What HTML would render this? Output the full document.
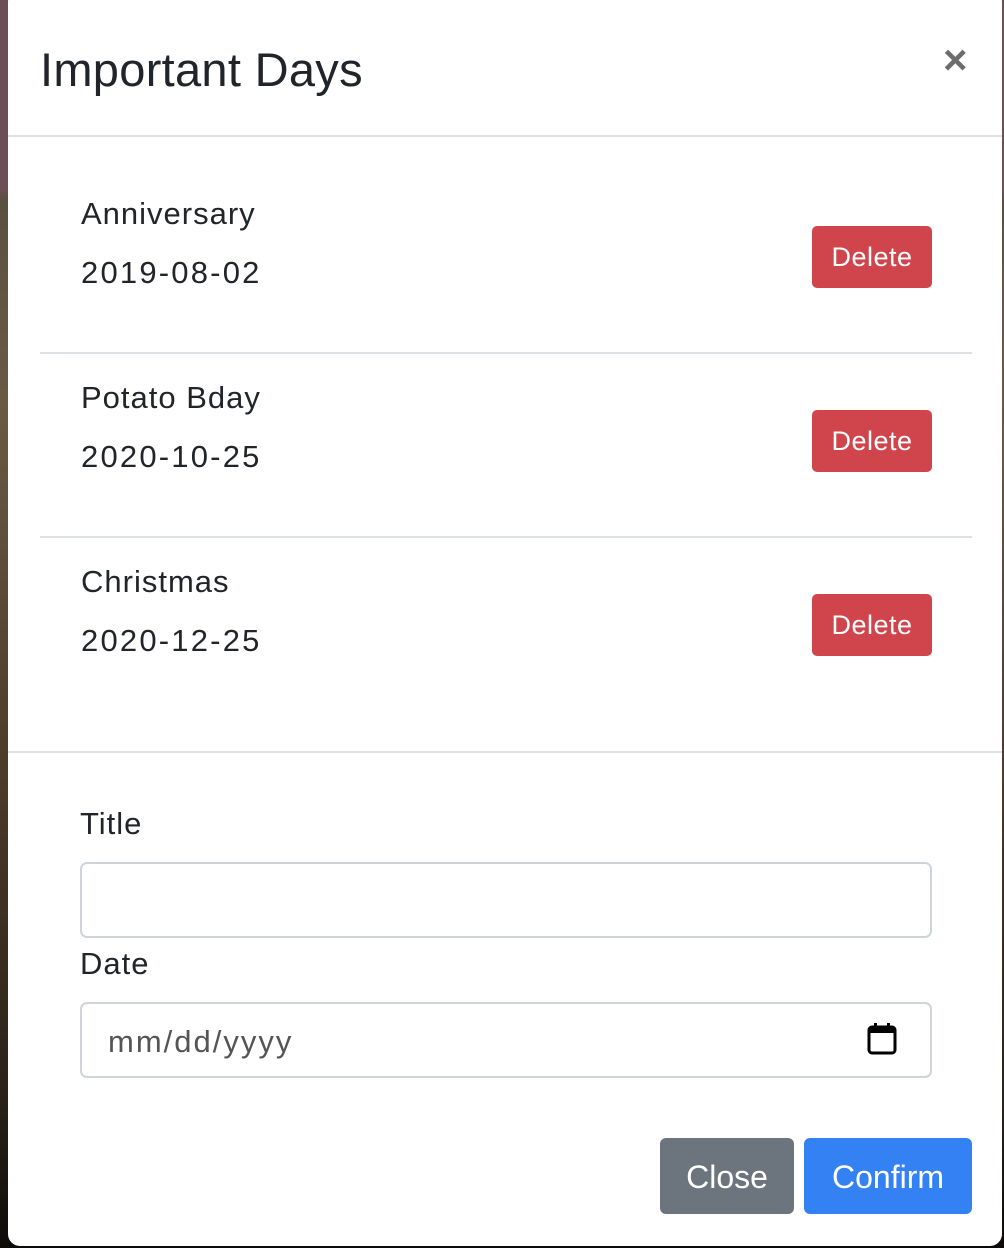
<!DOCTYPE html>
<html><head><style>
body{margin:0;width:1004px;height:1248px;overflow:hidden;font-family:"Liberation Sans",sans-serif;color:#212529;background:linear-gradient(#6b4f55 0,#6b4f55 190px,#5a5040 200px,#6a5a44 400px,#4a3828 800px,#2a2218 1100px,#0d0b08 1248px);position:relative}
.m{position:absolute;left:8px;top:-10px;width:994px;height:1256px;background:#fff;border-radius:12px}
.t{position:absolute;left:40px;top:43px;font-size:47px;line-height:54px;letter-spacing:0.3px}
.x{position:absolute;left:943px;top:40px;font-size:42px;font-weight:bold;color:#6c6c6c;line-height:40px}
.hr{position:absolute;height:2px;background:#dee2e6}
.n{position:absolute;left:81px;font-size:31px;line-height:36px;letter-spacing:1px}
.d{letter-spacing:2.2px}
.del{position:absolute;left:812px;width:120px;height:62px;background:#d0454c;color:#fff;border-radius:5px;font-size:27px;text-align:center;line-height:62px;letter-spacing:0.5px}
.lb{position:absolute;left:80px;font-size:31px;line-height:36px;letter-spacing:1px}
.in{position:absolute;left:80px;width:848px;height:72px;border:2px solid #ced4da;border-radius:7px}
.b{position:absolute;top:1138px;height:76px;color:#fff;border-radius:6px;font-size:32px;line-height:78px;text-align:center}
</style></head><body>
<div class="m"></div>
<div class="t">Important Days</div>
<div class="x">×</div>
<div class="hr" style="left:8px;width:994px;top:135px"></div>
<div class="n" style="top:196px">Anniversary</div>
<div class="n d" style="top:255px">2019-08-02</div>
<div class="del" style="top:226px">Delete</div>
<div class="hr" style="left:40px;width:932px;top:352px"></div>
<div class="n" style="top:380px">Potato Bday</div>
<div class="n d" style="top:439px">2020-10-25</div>
<div class="del" style="top:410px">Delete</div>
<div class="hr" style="left:40px;width:932px;top:536px"></div>
<div class="n" style="top:564px">Christmas</div>
<div class="n d" style="top:623px">2020-12-25</div>
<div class="del" style="top:594px">Delete</div>
<div class="hr" style="left:8px;width:994px;top:751px"></div>
<div class="lb" style="top:806px">Title</div>
<div class="in" style="top:862px"></div>
<div class="lb" style="top:946px">Date</div>
<div class="in" style="top:1002px"><span style="position:absolute;left:26px;top:20px;font-size:31px;color:#555;letter-spacing:2px">mm/dd/yyyy</span>
<svg style="position:absolute;left:784px;top:18px" width="32" height="34" viewBox="0 0 32 34"><rect x="3" y="5" width="26" height="26" rx="3" fill="none" stroke="#000" stroke-width="3"/><rect x="3" y="5" width="26" height="6" fill="#000"/><rect x="8" y="1" width="3" height="6" fill="#000"/><rect x="21" y="1" width="3" height="6" fill="#000"/></svg></div>
<div class="b" style="left:660px;width:134px;background:#6c757d">Close</div>
<div class="b" style="left:804px;width:168px;background:#3381f3">Confirm</div>
</body></html>
